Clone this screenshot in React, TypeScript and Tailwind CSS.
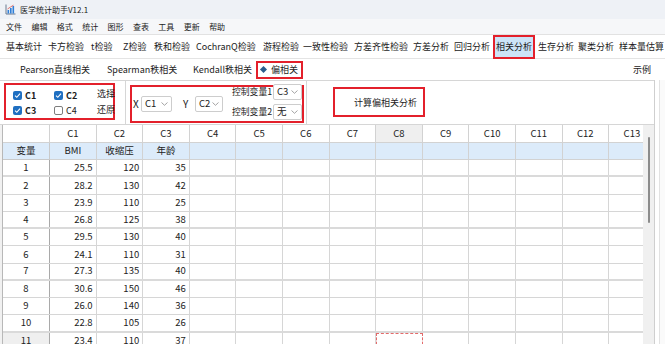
import React from "react";

const menus = ["文件", "编辑", "格式", "统计", "图形", "查表", "工具", "更新", "帮助"];

const tabs: { name: string; w: string }[] = [
  { name: "基本统计", w: "w-[42px]" },
  { name: "卡方检验", w: "w-[43px]" },
  { name: "t检验", w: "w-[32px]" },
  { name: "Z检验", w: "w-[31px]" },
  { name: "秩和检验", w: "w-[42px]" },
  { name: "CochranQ检验", w: "w-[67px]" },
  { name: "游程检验", w: "w-[40px]" },
  { name: "一致性检验", w: "w-[51px]" },
  { name: "方差齐性检验", w: "w-[59px]" },
  { name: "方差分析", w: "w-[41px]" },
  { name: "回归分析", w: "w-[42px]" },
  { name: "相关分析", w: "w-[42px]" },
  { name: "生存分析", w: "w-[40px]" },
  { name: "聚类分析", w: "w-[41px]" },
  { name: "样本量估算", w: "w-[50px]" },
];

const cols = Array.from({ length: 13 }, (_, i) => `C${i + 1}`);

const rows = [
  ["25.5", "120", "35"],
  ["28.2", "130", "42"],
  ["23.9", "110", "25"],
  ["26.8", "125", "38"],
  ["29.5", "130", "40"],
  ["24.1", "110", "31"],
  ["27.3", "135", "40"],
  ["30.6", "150", "46"],
  ["26.0", "140", "36"],
  ["22.8", "105", "26"],
  ["23.4", "110", "37"],
];

const AppIcon = () => (
  <svg width="11" height="11" viewBox="0 0 11 11">
    <path d="M1 0.5 V10 H10.5" stroke="#6b7a90" strokeWidth="1" fill="none" />
    <rect x="2.5" y="6" width="1.6" height="3.5" fill="#2f7fd8" />
    <rect x="5" y="4" width="1.6" height="5.5" fill="#2f7fd8" />
    <rect x="7.5" y="2" width="1.6" height="7.5" fill="#2f7fd8" />
    <path d="M2.5 5 L5.5 3 L8.5 1.2" stroke="#e0534d" strokeWidth="0.8" fill="none" />
  </svg>
);

const Check = ({ checked }: { checked: boolean }) =>
  checked ? (
    <span className="w-[9px] h-[9px] rounded-[2px] bg-[#1f6fc1] flex items-center justify-center shrink-0">
      <svg width="7" height="7" viewBox="0 0 7 7">
        <path d="M1 3.7 L2.8 5.3 L6 1.6" stroke="white" strokeWidth="1.1" fill="none" />
      </svg>
    </span>
  ) : (
    <span className="w-[9px] h-[9px] rounded-[2px] border border-[#7d7d7d] bg-white shrink-0" />
  );

const Select = ({ value, w }: { value: string; w: string }) => (
  <div
    className={`${w} h-[16px] border border-[#cdcdcd] rounded-[2px] bg-white flex items-center justify-between pl-[3px] pr-[3px] text-[9.5px] shrink-0`}
  >
    <span>{value}</span>
    <svg width="7" height="4" viewBox="0 0 7 4">
      <path d="M0.5 0.5 L3.5 3.3 L6.5 0.5" stroke="#9a9a9a" strokeWidth="0.9" fill="none" />
    </svg>
  </div>
);

const CheckItem = ({ label, checked, w }: { label: string; checked: boolean; w: string }) => (
  <div className={`${w} flex items-center gap-[3px] shrink-0`}>
    <Check checked={checked} />
    <span className={checked ? "font-bold" : ""}>{label}</span>
  </div>
);

export default function App() {
  return (
    <div className="w-[665px] h-[344px] overflow-hidden bg-white text-[#1b1b1b] font-['Noto_Sans_CJK_SC',sans-serif] flex flex-col leading-none whitespace-nowrap">
      {/* title bar */}
      <div className="h-[19px] bg-[#eef1f6] flex items-center pl-[5px] gap-[4px] text-[8px] shrink-0">
        <AppIcon />
        <span>医学统计助手V12.1</span>
      </div>

      {/* menu bar */}
      <div className="h-[16px] bg-[#f6f7f9] flex items-center pl-[6px] text-[8px] border-b border-[#e2e2e2] shrink-0">
        {menus.map((m) => (
          <span key={m} className="w-[25.4px] shrink-0">
            {m}
          </span>
        ))}
      </div>

      {/* module tabs */}
      <div className="h-[24px] flex items-center pl-[6px] text-[9px] border-b border-[#e4e4e4] shrink-0">
        {tabs.map((t) => (
          <div key={t.name} className={`${t.w} shrink-0 h-full flex items-center`}>
            {t.name === "相关分析" ? (
              <span className="-ml-[3px] h-[24px] px-[1px] border-2 border-[#e3202b] bg-[#cce4f7] flex items-center">
                {t.name}
              </span>
            ) : (
              <span>{t.name}</span>
            )}
          </div>
        ))}
      </div>

      {/* sub tabs */}
      <div className="h-[21px] flex items-center pl-[20px] pr-[14px] text-[9px] shrink-0">
        <span className="w-[87px] shrink-0">Pearson直线相关</span>
        <span className="w-[86px] shrink-0">Spearman秩相关</span>
        <span className="w-[63px] shrink-0">Kendall秩相关</span>
        <div className="w-[47px] h-[18px] border-2 border-[#e3202b] flex items-center pl-[3px] gap-[5px] shrink-0">
          <span className="w-[5px] h-[5px] bg-[#2b5d8c] rotate-45 shrink-0" />
          <span>偏相关</span>
        </div>
        <span className="ml-auto">示例</span>
      </div>

      <div className="flex-1 flex min-h-0">
        {/* main area */}
        <div className="w-[655px] border-r border-[#cfcfcf] flex flex-col shrink-0">
          {/* options panel */}
          <div className="h-[45px] border-y border-[#d6d6d6] flex text-[9px] shrink-0">
            <div className="w-[126px] border-r border-[#d6d6d6] pl-[4px] pt-[2px] shrink-0">
              <div className="w-[111px] h-[37px] border-2 border-[#e3202b] pt-[3px] flex flex-col">
                <div className="h-[16px] flex items-center pl-[7px]">
                  <CheckItem label="C1" checked w="w-[41px]" />
                  <CheckItem label="C2" checked w="w-[43px]" />
                  <span className="-mt-[5px]">选择</span>
                </div>
                <div className="h-[16px] flex items-center pl-[7px]">
                  <CheckItem label="C3" checked w="w-[41px]" />
                  <CheckItem label="C4" checked={false} w="w-[43px]" />
                  <span className="-mt-[3px]">还原</span>
                </div>
              </div>
            </div>

            <div className="w-[180px] pl-[4px] pt-[4px] shrink-0">
              <div className="w-[174px] h-[38px] border-2 border-[#e3202b] flex items-center pl-[1px]">
                <span className="text-[10px] w-[8px] shrink-0">X</span>
                <Select value="C1" w="w-[31px]" />
                <span className="text-[10px] ml-[11px] w-[12px] shrink-0">Y</span>
                <Select value="C2" w="w-[28px]" />
                <div className="ml-[9px] flex flex-col gap-[4px] -mt-[4px]">
                  <div className="flex items-center">
                    <span className="w-[41px] text-[8.8px] shrink-0">控制变量1</span>
                    <Select value="C3" w="w-[29px]" />
                  </div>
                  <div className="flex items-center">
                    <span className="w-[41px] text-[8.8px] shrink-0">控制变量2</span>
                    <Select value="无" w="w-[29px]" />
                  </div>
                </div>
              </div>
            </div>

            <div className="flex-1 border-l border-[#d6d6d6] pl-[26px] pt-[6px]">
              <div className="w-[92px] h-[30px] border-2 border-[#e3202b] flex items-center pl-[19px]">
                计算偏相关分析
              </div>
            </div>
          </div>

          {/* data grid */}
          <div className="flex-1 flex min-h-0">
            <div className="w-[3px] bg-[#f1f1f1] border-r border-[#b8b8b8] shrink-0" />
            <div className="w-[640px] overflow-hidden shrink-0 text-[9.5px] text-[#222]">
              <div className="flex h-[18px]">
                <div className="w-[47px] shrink-0 border-r border-b border-[#d2d2d2]" />
                {cols.map((c) => (
                  <div
                    key={c}
                    className={`w-[46.6px] shrink-0 border-r border-b border-[#d2d2d2] flex items-center justify-center ${
                      c === "C8" ? "bg-[#efefef]" : "bg-white"
                    }`}
                  >
                    {c}
                  </div>
                ))}
              </div>
              <div className="flex h-[17px] bg-[#dcebfa]">
                <div className="w-[47px] shrink-0 border-r border-b border-[#c9c9c9] flex items-center justify-center">
                  变量
                </div>
                {cols.map((c, i) => (
                  <div
                    key={c}
                    className="w-[46.6px] shrink-0 border-r border-b border-[#d2d2d2] flex items-center justify-center"
                  >
                    {["BMI", "收缩压", "年龄"][i] ?? ""}
                  </div>
                ))}
              </div>
              {rows.map((r, ri) => {
                const thick = ri === 0 || ri === 3 || ri === 6 || ri === 9;
                const last = ri === 10;
                return (
                  <div
                    key={ri}
                    className={`flex h-[17.25px] ${thick ? "border-b-2 border-[#dadada]" : "border-b border-[#d6d6d6]"}`}
                  >
                    <div
                      className={`w-[47px] shrink-0 border-r border-[#a9a9a9] flex items-center justify-center ${
                        last ? "bg-[#efefef]" : ""
                      }`}
                    >
                      {ri + 1}
                    </div>
                    {cols.map((c, ci) => (
                      <div
                        key={c}
                        className={`w-[46.6px] shrink-0 border-r border-[#d6d6d6] flex items-center justify-end pr-[3px] ${
                          last && c === "C8" ? "border border-dashed border-[#e36a6a]" : ""
                        }`}
                      >
                        {r[ci] ?? ""}
                      </div>
                    ))}
                  </div>
                );
              })}
            </div>
            {/* scrollbar */}
            <div className="w-[11px] bg-[#f0f0f0] shrink-0 flex justify-center pt-[12px]">
              <div className="w-[2px] h-[86px] rounded-full bg-[#8c8c8c]" />
            </div>
          </div>
        </div>

        {/* right edge panel */}
        <div className="flex-1 pl-[4px]">
          <div className="h-full border-l border-[#e2e2e2] bg-[#fafafa]" />
        </div>
      </div>
    </div>
  );
}
